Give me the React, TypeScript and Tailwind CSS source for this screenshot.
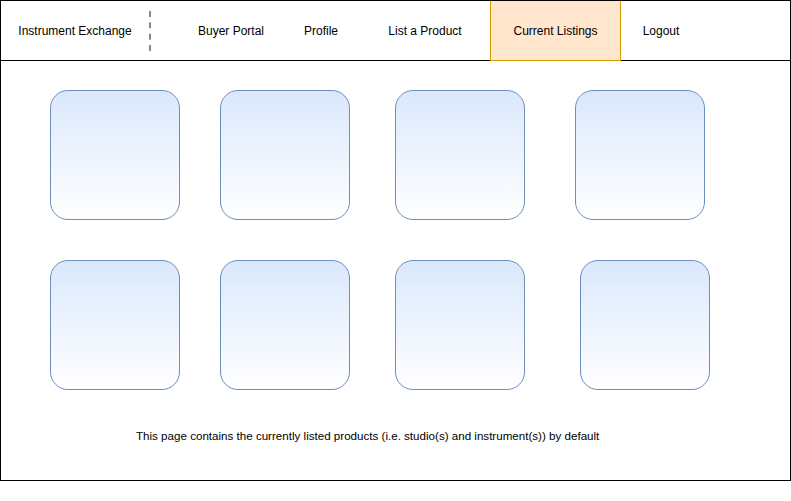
import React from 'react';

const Card: React.FC<{ className?: string }> = ({ className = '' }) => (
  <div
    className={`h-[130px] w-[130px] shrink-0 rounded-[18px] border border-[#6c8ebf] bg-gradient-to-b from-[#dae8fc] to-white ${className}`}
  />
);

export default function App() {
  return (
    <div className="h-[501px] w-[791px] bg-white font-['Liberation_Sans',Arial,sans-serif] text-[12px] text-black">
      <div className="flex h-[481px] w-[791px] flex-col border border-black">
        {/* Header */}
        <div className="flex h-[60px] shrink-0 items-center border-b border-black">
          <div className="w-[148px] text-center">Instrument Exchange</div>
          <div className="h-[40px] border-l-2 border-dashed border-[#888]" />
          <div className="ml-[40px] w-[80px] text-center">Buyer Portal</div>
          <div className="ml-[20px] w-[60px] text-center">Profile</div>
          <div className="ml-[24px] w-[100px] text-center">List a Product</div>
          <div className="ml-[15px] flex h-[60px] w-[131px] items-center justify-center self-start border border-t-0 border-[#d79b00] bg-[#ffe6cc]">
            Current Listings
          </div>
          <div className="ml-[10px] w-[60px] text-center">Logout</div>
        </div>

        {/* Listings */}
        <div className="flex flex-col pt-[29px]">
          <div className="flex pl-[49px]">
            <Card />
            <Card className="ml-[40px]" />
            <Card className="ml-[45px]" />
            <Card className="ml-[50px]" />
          </div>
          <div className="mt-[40px] flex pl-[49px]">
            <Card />
            <Card className="ml-[40px]" />
            <Card className="ml-[45px]" />
            <Card className="ml-[55px]" />
          </div>
          <p className="mt-[37px] pl-[135px] text-[11.6px]">
            This page contains the currently listed products (i.e. studio(s) and instrument(s)) by default
          </p>
        </div>
      </div>
    </div>
  );
}
